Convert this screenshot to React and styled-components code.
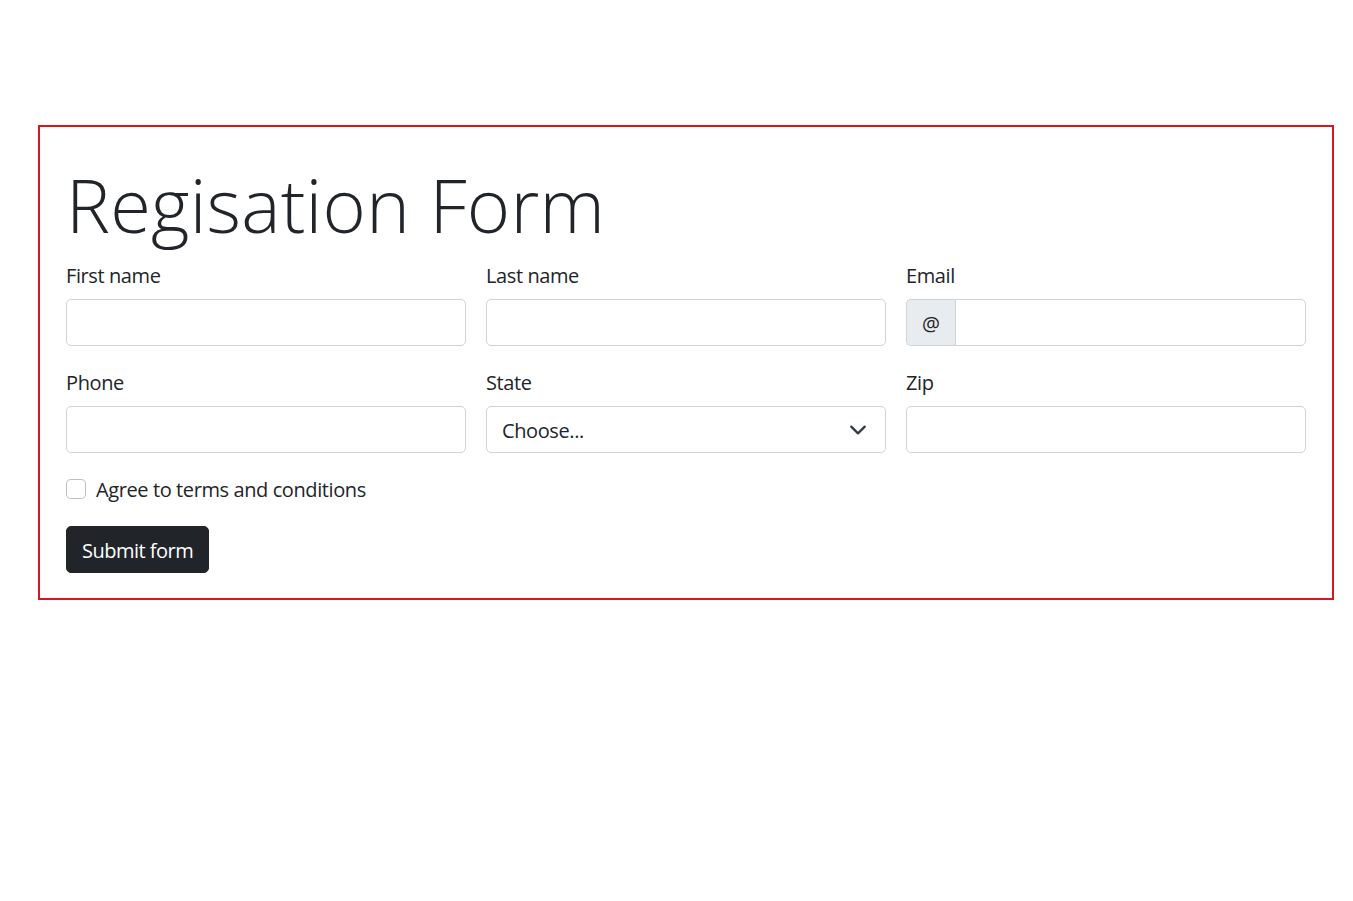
import React from "react";
import styled, { createGlobalStyle } from "styled-components";

const Global = createGlobalStyle`
  html, body { margin: 0; padding: 0; background: #fff; }
  body {
    font-family: "Open Sans", "Noto Sans", sans-serif;
    font-size: 20px;
    line-height: 1.5;
    color: #212529;
    letter-spacing: -0.4px;
  }
  *, *::before, *::after { box-sizing: border-box; }
`;

const Page = styled.div`
  padding: 125px 0 0 38px;
`;

const FormBox = styled.form`
  width: 1296px;
  border: 2px solid #d9161c;
  padding: 36px 26px 25px;
  display: flex;
  flex-direction: column;
  gap: 20px;
`;

const Title = styled.h1`
  margin: 0 0 -8px;
  font-size: 74px;
  font-weight: 300;
  line-height: 84px;
  letter-spacing: 0.2px;
`;

const Grid = styled.div`
  display: grid;
  grid-template-columns: repeat(3, 1fr);
  gap: 20px;
`;

const Field = styled.div`
  display: flex;
  flex-direction: column;
`;

const Label = styled.label`
  display: block;
  padding-top: 2px;
  margin-bottom: 8px;
  line-height: 30px;
  font-size: 20px;
`;

const Input = styled.input`
  display: block;
  width: 100%;
  height: 47px;
  padding: 7.5px 15px;
  font: inherit;
  font-size: 20px;
  line-height: 30px;
  letter-spacing: -0.4px;
  color: #212529;
  background: #fff;
  border: 1px solid #ced4da;
  border-radius: ${(p) => (p.$joined ? "0 5px 5px 0" : "5px")};
  outline: none;
  flex: 1;
  min-width: 0;
`;

const Group = styled.div`
  display: flex;
  width: 100%;
`;

const Addon = styled.span`
  display: flex;
  align-items: center;
  padding: 9px 15px 6px;
  height: 47px;
  font-size: 20px;
  line-height: 30px;
  background: #e9ecef;
  border: 1px solid #ced4da;
  border-right: none;
  border-radius: 5px 0 0 5px;
  color: #212529;
`;

const SelectWrap = styled.div`
  position: relative;
  width: 100%;
`;

const Select = styled.select`
  display: block;
  width: 100%;
  height: 47px;
  padding: 9px 45px 6px 15px;
  font: inherit;
  font-size: 20px;
  line-height: 30px;
  letter-spacing: -0.4px;
  color: #212529;
  background: #fff;
  border: 1px solid #ced4da;
  border-radius: 5px;
  appearance: none;
  -webkit-appearance: none;
  outline: none;
`;

const Chevron = styled.svg`
  position: absolute;
  right: 19px;
  top: 50%;
  transform: translateY(-50%);
  width: 18px;
  height: 18px;
  pointer-events: none;
`;

const CheckRow = styled.div`
  display: flex;
  align-items: flex-start;
  min-height: 30px;
  margin-bottom: 0.5px;
`;

const Check = styled.input`
  appearance: none;
  -webkit-appearance: none;
  width: 20px;
  height: 20px;
  margin: 6px 10px 0 0;
  border: 1px solid rgba(0, 0, 0, 0.25);
  border-radius: 5px;
  background: #fff;
  flex: none;
`;

const CheckLabel = styled.label`
  padding-top: 2px;
  line-height: 30px;
  font-size: 20px;
`;

const Button = styled.button`
  align-self: flex-start;
  padding: 9px 15px 6px;
  font: inherit;
  font-size: 20px;
  line-height: 30px;
  letter-spacing: -0.5px;
  color: #fff;
  background: #212529;
  border: 1px solid #212529;
  border-radius: 5px;
  cursor: pointer;
`;

export default function App() {
  return (
    <>
      <Global />
      <Page>
        <FormBox onSubmit={(e) => e.preventDefault()}>
          <Title>Regisation Form</Title>
          <Grid>
            <Field>
              <Label htmlFor="fn">First name</Label>
              <Input id="fn" type="text" />
            </Field>
            <Field>
              <Label htmlFor="ln">Last name</Label>
              <Input id="ln" type="text" />
            </Field>
            <Field>
              <Label htmlFor="em">Email</Label>
              <Group>
                <Addon>@</Addon>
                <Input id="em" type="text" $joined />
              </Group>
            </Field>
            <Field>
              <Label htmlFor="ph">Phone</Label>
              <Input id="ph" type="text" />
            </Field>
            <Field>
              <Label htmlFor="st">State</Label>
              <SelectWrap>
                <Select id="st" defaultValue="">
                  <option value="">Choose...</option>
                </Select>
                <Chevron viewBox="0 0 16 16">
                  <path
                    d="m2 5 6 6 6-6"
                    fill="none"
                    stroke="#343a40"
                    strokeWidth="2"
                    strokeLinecap="round"
                    strokeLinejoin="round"
                  />
                </Chevron>
              </SelectWrap>
            </Field>
            <Field>
              <Label htmlFor="zp">Zip</Label>
              <Input id="zp" type="text" />
            </Field>
          </Grid>
          <CheckRow>
            <Check id="agree" type="checkbox" />
            <CheckLabel htmlFor="agree">Agree to terms and conditions</CheckLabel>
          </CheckRow>
          <Button type="submit">Submit form</Button>
        </FormBox>
      </Page>
    </>
  );
}
